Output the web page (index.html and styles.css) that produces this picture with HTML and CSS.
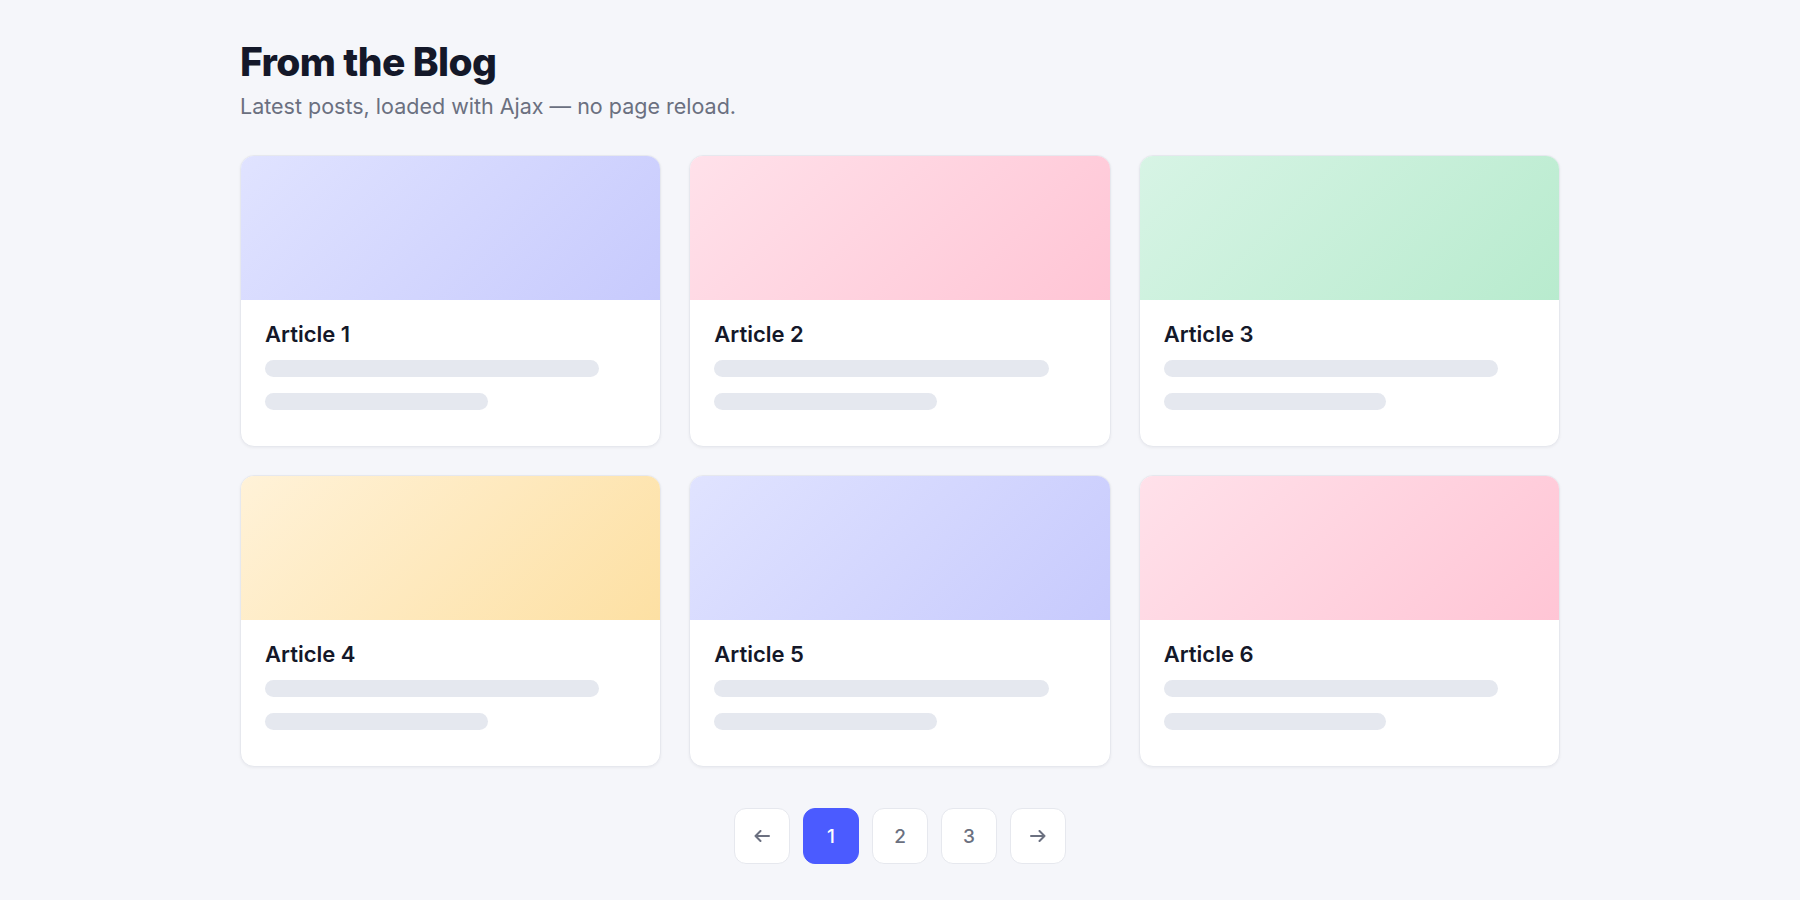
FILE: index.html
```html
<!DOCTYPE html>
<html lang="en">
<head>
    <meta charset="UTF-8">
    <meta name="viewport" content="width=device-width, initial-scale=1.0">
    <title>From the Blog</title>
    <link rel="stylesheet" href="styles.css">
</head>
<body>
    <div class="container">
        <h1 class="title">From the Blog</h1>
        <p class="subtitle">Latest posts, loaded with Ajax — no page reload.</p>

        <div class="posts">
            <div class="card">
                <div class="cover cover-indigo"></div>
                <div class="card-body">
                    <h3>Article 1</h3>
                    <div class="line line-long"></div>
                    <div class="line line-short"></div>
                </div>
            </div>
            <div class="card">
                <div class="cover cover-pink"></div>
                <div class="card-body">
                    <h3>Article 2</h3>
                    <div class="line line-long"></div>
                    <div class="line line-short"></div>
                </div>
            </div>
            <div class="card">
                <div class="cover cover-green"></div>
                <div class="card-body">
                    <h3>Article 3</h3>
                    <div class="line line-long"></div>
                    <div class="line line-short"></div>
                </div>
            </div>
            <div class="card">
                <div class="cover cover-amber"></div>
                <div class="card-body">
                    <h3>Article 4</h3>
                    <div class="line line-long"></div>
                    <div class="line line-short"></div>
                </div>
            </div>
            <div class="card">
                <div class="cover cover-indigo"></div>
                <div class="card-body">
                    <h3>Article 5</h3>
                    <div class="line line-long"></div>
                    <div class="line line-short"></div>
                </div>
            </div>
            <div class="card">
                <div class="cover cover-pink"></div>
                <div class="card-body">
                    <h3>Article 6</h3>
                    <div class="line line-long"></div>
                    <div class="line line-short"></div>
                </div>
            </div>
        </div>

        <div class="pager">
            <button type="button" class="page-btn" aria-label="Previous">
                <svg width="16" height="12" viewBox="0 0 16 12" fill="none" stroke="currentColor" stroke-width="2" stroke-linecap="round" stroke-linejoin="round"><path d="M15 6H1.5M6.5 1L1.5 6l5 5"/></svg>
            </button>
            <button type="button" class="page-btn active">1</button>
            <button type="button" class="page-btn">2</button>
            <button type="button" class="page-btn">3</button>
            <button type="button" class="page-btn" aria-label="Next">
                <svg width="16" height="12" viewBox="0 0 16 12" fill="none" stroke="currentColor" stroke-width="2" stroke-linecap="round" stroke-linejoin="round"><path d="M1 6h13.5M9.5 1l5 5-5 5"/></svg>
            </button>
        </div>
    </div>
</body>
</html>
```

FILE: styles.css
```css
body {
    font-family: Inter, "Noto Sans", sans-serif;
    margin: 0;
    background-color: #f5f6fa;
    color: #141829;
}
.container {
    width: 1320px;
    margin: 0 auto;
    padding-top: 39px;
}
.title {
    margin: 0;
    font-size: 39px;
    line-height: 46px;
    font-weight: 800;
    letter-spacing: -0.6px;
}
.subtitle {
    margin: 6px 0 0;
    font-size: 21.5px;
    line-height: 30px;
    color: #6b7080;
}
.posts {
    display: grid;
    grid-template-columns: repeat(3, 1fr);
    gap: 28px;
    margin-top: 34px;
}
.card {
    background: #fff;
    border: 1px solid #e6e8ee;
    border-radius: 14px;
    overflow: hidden;
    box-shadow: 0 1px 3px rgba(20, 24, 41, 0.05);
}
.cover {
    height: 144px;
}
.cover-indigo {
    background: linear-gradient(135deg, #e0e3ff, #c7cafd);
}
.cover-pink {
    background: linear-gradient(135deg, #ffe1ea, #ffc5d5);
}
.cover-green {
    background: linear-gradient(135deg, #d7f4e5, #b8ebce);
}
.cover-amber {
    background: linear-gradient(135deg, #fff2d8, #fde0a3);
}
.card-body {
    padding: 20px 24px 36px;
}
.card-body h3 {
    margin: 0;
    font-size: 22px;
    line-height: 28px;
    font-weight: 600;
}
.line {
    height: 17px;
    border-radius: 9px;
    background: #e5e8ef;
    margin-top: 16px;
}
.line-long {
    width: 90%;
    margin-top: 12px;
}
.line-short {
    width: 60%;
}
.pager {
    display: flex;
    justify-content: center;
    gap: 13px;
    margin-top: 41px;
}
.page-btn {
    width: 56px;
    height: 56px;
    display: flex;
    align-items: center;
    justify-content: center;
    background: #fff;
    border: 1px solid #e6e8ee;
    border-radius: 12px;
    font-family: inherit;
    font-size: 19px;
    font-weight: 500;
    color: #6b7080;
    cursor: pointer;
}
.page-btn.active {
    background: #4b5bff;
    border-color: #4b5bff;
    color: #fff;
}
```
